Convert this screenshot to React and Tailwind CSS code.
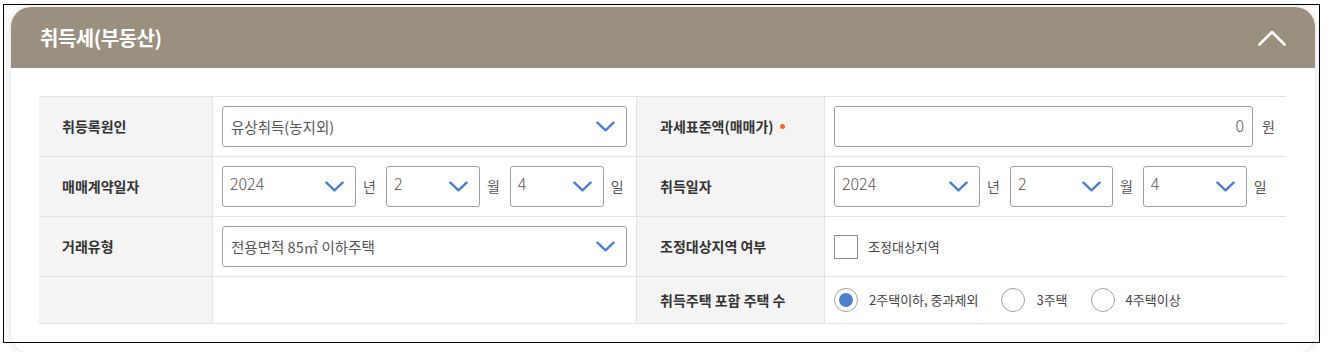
import React from 'react'

function Chevron({ className = 'w-[19px] h-[11px]' }) {
  return (
    <svg viewBox="0 0 20 11" className={className} fill="none">
      <polyline points="1.5,1.5 10,9.5 18.5,1.5" stroke="#4f7fcf" strokeWidth="2.6" strokeLinecap="round" strokeLinejoin="round" />
    </svg>
  )
}

function Select({ value, className = '', wide }) {
  return (
    <div className={`h-[41px] flex items-center justify-between border border-[#a0a0a0] rounded-[3px] bg-white ${wide ? 'pl-[8px] pr-[11px]' : 'pl-[7px] pr-[11px]'} ${className}`}>
      {wide ? (
        <span className="text-[14.5px] text-[#555]">{value}</span>
      ) : (
        <span className="text-[16px] leading-none text-[#555] font-light pb-[7px]">{value}</span>
      )}
      <Chevron />
    </div>
  )
}

function Unit({ children }) {
  return <span className="text-[14px] text-[#555] ml-[7px] mr-[10px]">{children}</span>
}

function DateGroup({ widths }) {
  return (
    <div className="flex items-center">
      <Select value="2024" className={widths[0]} />
      <Unit>년</Unit>
      <Select value="2" className={widths[1]} />
      <Unit>월</Unit>
      <Select value="4" className={widths[2]} />
      <Unit>일</Unit>
    </div>
  )
}

function Label({ children, last }) {
  return (
    <div className={`bg-[#f4f4f4] border-r border-[#e3e3e3] flex items-center text-[14px] font-bold text-[#333] pl-[23px] ${last ? '' : 'border-b'}`}>
      {children}
    </div>
  )
}

function Value({ children, right, last }) {
  return (
    <div className={`flex items-center border-[#e3e3e3] ${right ? '' : 'border-r'} ${last ? '' : 'border-b'} pl-[9px]`}>
      {children}
    </div>
  )
}

function Radio({ checked, label }) {
  return (
    <label className="flex items-center mr-[23px]">
      <span className="w-[24px] h-[24px] rounded-full border border-[#a0a0a0] flex items-center justify-center bg-white">
        {checked && <span className="w-[14px] h-[14px] rounded-full bg-[#4f7fcf]" />}
      </span>
      <span className="ml-[11px] text-[13px] text-[#444]">{label}</span>
    </label>
  )
}

export default function App() {
  return (
    <div className="relative w-[1330px] h-[352px] bg-white overflow-hidden font-['Noto_Sans_CJK_KR','Noto_Sans',sans-serif]">
      <div className="ml-[11px] mt-[7px] w-[1304px] rounded-[20px] bg-white shadow-[0_0_8px_rgba(0,0,0,0.14)]">
        {/* header */}
        <div className="h-[61px] bg-[#9b907f] rounded-t-[20px] flex items-center justify-between pl-[29px] pr-[29px]">
          <h2 className="text-[20px] font-bold text-white tracking-[-0.5px]">취득세(부동산)</h2>
          <svg viewBox="0 0 28 16" className="w-[28px] h-[16px]" fill="none">
            <polyline points="1.5,14.5 14,2 26.5,14.5" stroke="white" strokeWidth="2.6" strokeLinecap="round" strokeLinejoin="round" />
          </svg>
        </div>

        {/* body */}
        <div className="pt-[28px] pl-[28px] pr-[29px] pb-[29px]">
          <div className="grid grid-cols-[174px_424px_188px_461px] grid-rows-[60px_60px_60px_46px] border-t border-[#e3e3e3] border-b">
            <Label>취등록원인</Label>
            <Value>
              <Select wide value="유상취득(농지외)" className="w-[405px]" />
            </Value>
            <Label>
              과세표준액(매매가)
              <span className="ml-[6px] w-[5px] h-[5px] rounded-full bg-[#f26a1b]" />
            </Label>
            <Value right>
              <div className="w-[419px] h-[41px] border border-[#a0a0a0] rounded-[3px] flex items-center justify-end pr-[8px] text-[16px] leading-none font-light text-[#555]">
                <span className="pb-[4px]">0</span>
              </div>
              <span className="ml-[9px] text-[14px] text-[#555]">원</span>
            </Value>

            <Label>매매계약일자</Label>
            <Value>
              <DateGroup widths={['w-[134px]', 'w-[94px]', 'w-[94px]']} />
            </Value>
            <Label>취득일자</Label>
            <Value right>
              <DateGroup widths={['w-[146px]', 'w-[103px]', 'w-[104px]']} />
            </Value>

            <Label>거래유형</Label>
            <Value>
              <Select wide value="전용면적 85㎡ 이하주택" className="w-[405px]" />
            </Value>
            <Label>조정대상지역 여부</Label>
            <Value right>
              <span className="w-[24px] h-[24px] border border-[#8c8c8c] bg-white" />
              <span className="ml-[10px] text-[13px] text-[#444]">조정대상지역</span>
            </Value>

            <Label last />
            <Value last />
            <Label last>취득주택 포함 주택 수</Label>
            <Value right last>
              <Radio checked label="2주택이하, 중과제외" />
              <Radio label="3주택" />
              <Radio label="4주택이상" />
            </Value>
          </div>
        </div>
      </div>

      {/* capture frame */}
      <div className="absolute left-[3px] top-[4px] w-[1317px] h-[339px] border border-black pointer-events-none" />
    </div>
  )
}
